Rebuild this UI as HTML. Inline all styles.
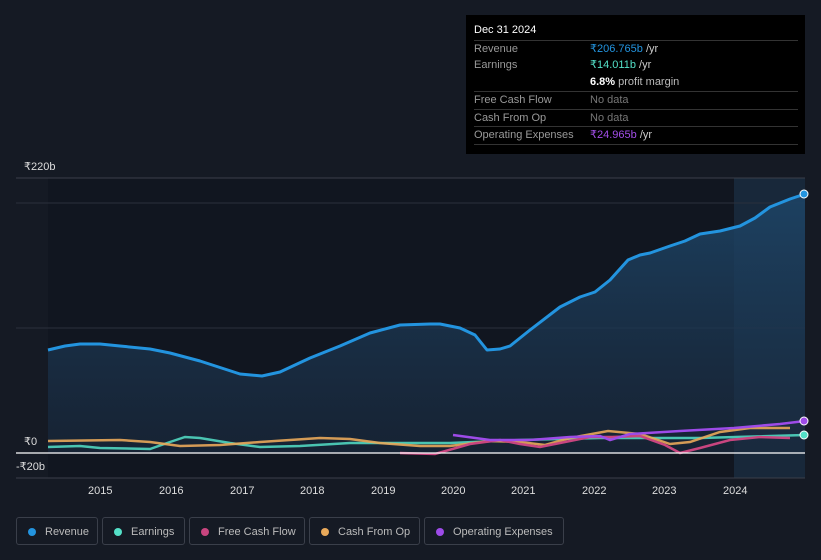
<!DOCTYPE html><html><head><style>
body{margin:0;width:821px;height:560px;background:#151a24;font-family:"Liberation Sans",sans-serif;overflow:hidden;position:relative}
.tt{position:absolute;left:466px;top:15px;width:339px;height:139px;background:#000;color:#fff;font-size:11px}
.tt .h{position:absolute;left:8px;top:9px;font-size:11px}
.row{position:absolute;left:8px;width:324px;border-top:1px solid #333;height:17px;line-height:17px}
.row span.l{color:#999;display:inline-block;width:116px}
.leg{position:absolute;top:517px;height:28px;border:1px solid #3a3f4a;border-radius:3px;color:#bbb;font-size:11px;line-height:28px;box-sizing:border-box;padding-left:28px}
.leg i{position:absolute;left:11px;top:10px;width:8px;height:8px;border-radius:50%}
.ax{position:absolute;color:#ddd;font-size:11px}
</style></head><body>
<svg width="821" height="560" style="position:absolute;left:0;top:0">
<defs><linearGradient id="g" x1="0" y1="0" x2="0" y2="1"><stop offset="0" stop-color="#1d4466" stop-opacity=".9"/><stop offset="1" stop-color="#1a2b40" stop-opacity=".6"/></linearGradient></defs>
<rect x="48" y="178" width="757" height="300" fill="#111620"/>
<rect x="734" y="178" width="71" height="300" fill="#18283a"/>
<line x1="16" y1="178" x2="805" y2="178" stroke="#3a3f4a"/>
<line x1="16" y1="203" x2="805" y2="203" stroke="#2a303c"/>
<line x1="16" y1="328" x2="805" y2="328" stroke="#2a303c"/>
<line x1="16" y1="478" x2="805" y2="478" stroke="#3a3f4a"/>
<path d="M48,350 L65,346 80,344 100,344 120,346 150,349 170,353 200,361 240,374 262,376 280,372 310,358 340,346 370,333 400,325 430,324 440,324 460,328 475,335 487,350 500,349 510,346 530,330 560,307 580,297 595,292 610,280 628,260 640,255 650,253 670,246 685,241 700,234 720,231 740,226 755,218 770,207 790,199 805,194 L805,453 L48,453Z" fill="url(#g)"/>
<path d="M48,350 L65,346 80,344 100,344 120,346 150,349 170,353 200,361 240,374 262,376 280,372 310,358 340,346 370,333 400,325 430,324 440,324 460,328 475,335 487,350 500,349 510,346 530,330 560,307 580,297 595,292 610,280 628,260 640,255 650,253 670,246 685,241 700,234 720,231 740,226 755,218 770,207 790,199 805,194" fill="none" stroke="#2394df" stroke-width="3" stroke-linejoin="round"/>
<path d="M48,447 L80,446 100,448 150,449 170,442 185,437 200,438 230,443 260,447 300,446 350,443 450,443 520,440 600,438 700,438 805,435" fill="none" stroke="#54e0c8" stroke-width="2.5" opacity=".85"/>
<path d="M48,441 L120,440 150,442 180,446 220,445 260,442 320,438 350,439 380,443 420,446 450,446 490,441 520,442 545,445 570,438 608,431 640,434 670,444 690,442 720,432 750,428 790,428" fill="none" stroke="#e9a95a" stroke-width="2.5" opacity=".9"/>
<path d="M400,453 L435,454 470,444 500,440 520,444 540,447 560,443 590,437 612,437 640,436 665,445 680,453 700,448 730,440 760,437 790,438" fill="none" stroke="#c8457f" stroke-width="2.5"/>
<path d="M453,435 L490,440 530,440 570,437 600,436 610,440 630,434 680,431 734,428 780,424 805,421" fill="none" stroke="#9d4be8" stroke-width="2.5"/>
<line x1="16" y1="453" x2="805" y2="453" stroke="#fff" stroke-width="1.2"/>
<circle cx="804" cy="194" r="4" fill="#2394df" stroke="#fff"/>
<circle cx="804" cy="421" r="4" fill="#9d4be8" stroke="#fff"/>
<circle cx="804" cy="435" r="4" fill="#54e0c8" stroke="#fff"/>
</svg>
<div class="ax" style="left:24px;top:160px">₹220b</div>
<div class="ax" style="left:24px;top:435px">₹0</div>
<div class="ax" style="left:16px;top:460px">-₹20b</div>
<div class="ax" style="left:88px;top:485px">2015</div><div class="ax" style="left:159px;top:485px">2016</div><div class="ax" style="left:230px;top:485px">2017</div><div class="ax" style="left:300px;top:485px">2018</div><div class="ax" style="left:371px;top:485px">2019</div><div class="ax" style="left:441px;top:485px">2020</div><div class="ax" style="left:511px;top:485px">2021</div><div class="ax" style="left:582px;top:485px">2022</div><div class="ax" style="left:652px;top:485px">2023</div><div class="ax" style="left:723px;top:485px">2024</div>
<div class="tt"><div class="h">Dec 31 2024</div>
<div class="row" style="top:25px"><span class="l">Revenue</span><b style="color:#2394df;font-weight:normal">₹206.765b</b> <span style="color:#ccc">/yr</span></div>
<div class="row" style="top:42px;border:0"><span class="l">Earnings</span><span style="color:#54e0c8">₹14.011b</span> <span style="color:#ccc">/yr</span></div>
<div class="row" style="top:59px;border:0"><span class="l"></span><b>6.8%</b> <span style="color:#bbb">profit margin</span></div>
<div class="row" style="top:76px"><span class="l">Free Cash Flow</span><span style="color:#777">No data</span></div>
<div class="row" style="top:94px"><span class="l">Cash From Op</span><span style="color:#777">No data</span></div>
<div class="row" style="top:111px"><span class="l">Operating Expenses</span><span style="color:#a24ee8">₹24.965b</span> <span style="color:#ccc">/yr</span></div>
<div class="row" style="top:129px;height:0"></div>
</div>
<div class="leg" style="left:16px;width:82px"><i style="background:#2394df"></i>Revenue</div>
<div class="leg" style="left:102px;width:83px"><i style="background:#54e0c8"></i>Earnings</div>
<div class="leg" style="left:189px;width:116px"><i style="background:#c8457f"></i>Free Cash Flow</div>
<div class="leg" style="left:309px;width:111px"><i style="background:#e9a95a"></i>Cash From Op</div>
<div class="leg" style="left:424px;width:140px"><i style="background:#9d4be8"></i>Operating Expenses</div>
</body></html>
